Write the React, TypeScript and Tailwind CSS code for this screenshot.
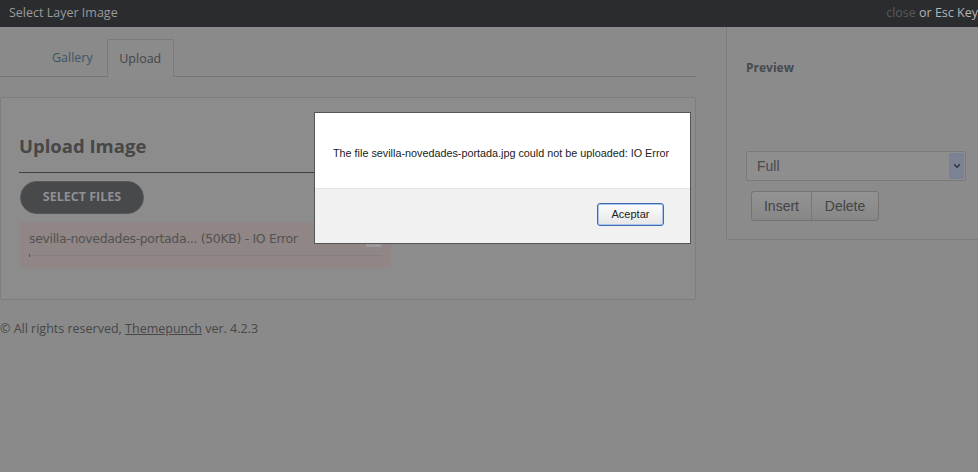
import { ChevronDown } from 'lucide-react'

const openSans = "font-['Open_Sans',sans-serif]"
const arial = "font-['Liberation_Sans',Arial,sans-serif]"

export default function App() {
  return (
    <div className={`relative h-[472px] w-[978px] overflow-hidden bg-[#8a8a8b] ${openSans}`}>
      <header className="flex h-[27px] items-center justify-between bg-[#2b2c2f] pl-[9px]">
        <span className="text-[12.5px] text-[#9a9a9a]">Select Layer Image</span>
        <span className="text-[12.5px] text-[#b4b4b4]">
          <span className="text-[#595959]">close</span> or Esc Key
        </span>
      </header>

      <div className="flex">
        <main className="w-[696px]">
          <nav className="mt-[12px] flex h-[38px] items-end border-b border-[#767677]">
            <span className="ml-[52px] pb-[8px] text-[12.5px] text-[#3e5563]">Gallery</span>
            <span className="-mb-px ml-[14px] flex h-[38px] w-[67px] items-center justify-center rounded-t-[2px] border border-b-0 border-[#7a7a7b] bg-[#8b8b8c] pt-[2px] text-[12.5px] text-[#454545]">
              Upload
            </span>
          </nav>

          <section className="mt-[20px] h-[203px] rounded-[2px] border border-[#7e7e7f] bg-[#8c8c8d] px-[18px] pt-[34px]">
            <h2 className="text-[18.5px] leading-[28px] font-bold text-[#474747]">Upload Image</h2>
            <div className="mt-[12px] mr-[276px] h-px bg-[#3f3f40]" />
            <button className="mt-[8px] ml-px h-[33px] w-[124px] rounded-full border border-[#565759] bg-[#48494b] text-[12.5px] font-bold text-[#8f9093] uppercase">
              Select Files
            </button>
            <div className="relative mt-[8px] ml-px h-[46px] w-[371px] bg-[#8f8685] px-[9px] pt-[8px]">
              <p className="font-['DejaVu_Sans',Verdana,sans-serif] text-[12.5px] leading-[18px] tracking-[-0.35px] text-[#525252]">
                sevilla-novedades-portada... (50KB) - IO Error
              </p>
              <div className="mt-[6px] flex h-[2px] items-center">
                <div className="h-[3px] w-[1px] bg-[#3e5f8a]" />
                <div className="h-px flex-1 bg-[#858080]" />
              </div>
              <div className="absolute top-[21px] right-[10px] h-[4px] w-[15px] bg-[#9a9a9a]" />
            </div>
          </section>

          <footer className="mt-[20px] text-[12.5px] text-[#474747]">
            © All rights reserved, <span className="underline">Themepunch</span> ver. 4.2.3
          </footer>
        </main>

        <aside className="ml-[30px] h-[213px] flex-1 rounded-bl-[2px] border-b border-l border-[#7c7c7d] bg-[#8b8b8c] pt-[32px] pl-[19px]">
          <h3 className="text-[12px] font-bold text-[#454a4f]">Preview</h3>
          <div className={`mt-[74px] flex h-[30px] w-[220px] items-center justify-between rounded-[2px] border border-[#7a7a7b] bg-[#8e8e8f] pr-px pl-[10px] ${arial}`}>
            <span className="text-[14px] text-[#4a4a4a]">Full</span>
            <span className="flex h-[26px] w-[15px] items-center justify-center rounded-[1px] bg-[#7a8294]">
              <ChevronDown className="h-[10px] w-[10px] text-[#2f3440]" strokeWidth={3.5} />
            </span>
          </div>
          <div className={`mt-[10px] ml-[5px] flex h-[30px] w-[128px] rounded-[3px] border border-[#747475] bg-gradient-to-b from-[#939394] to-[#878788] text-[14px] text-[#444] ${arial}`}>
            <span className="flex w-[60px] items-center justify-center border-r border-[#787879]">Insert</span>
            <span className="flex flex-1 items-center justify-center">Delete</span>
          </div>
        </aside>
      </div>

      <div className={`absolute top-[112px] left-[314px] w-[377px] border border-[#555657] bg-white ${arial}`}>
        <div className="h-[75px] pt-[32px] pl-[18px]">
          <p className="text-[10.8px] text-[#222]">
            The file sevilla-novedades-portada.jpg could not be uploaded: IO Error
          </p>
        </div>
        <div className="flex h-[55px] items-start justify-end border-t border-[#e2e2e2] bg-[#f1f1f1] pt-[14px] pr-[26px]">
          <button className="h-[23px] w-[67px] rounded-[3px] border border-[#3c6db3] bg-gradient-to-b from-[#fdfdfd] to-[#e6e6e6] text-[11px] text-[#222] shadow-[inset_0_0_0_1px_#a9c4ea]">
            Aceptar
          </button>
        </div>
      </div>
    </div>
  )
}
